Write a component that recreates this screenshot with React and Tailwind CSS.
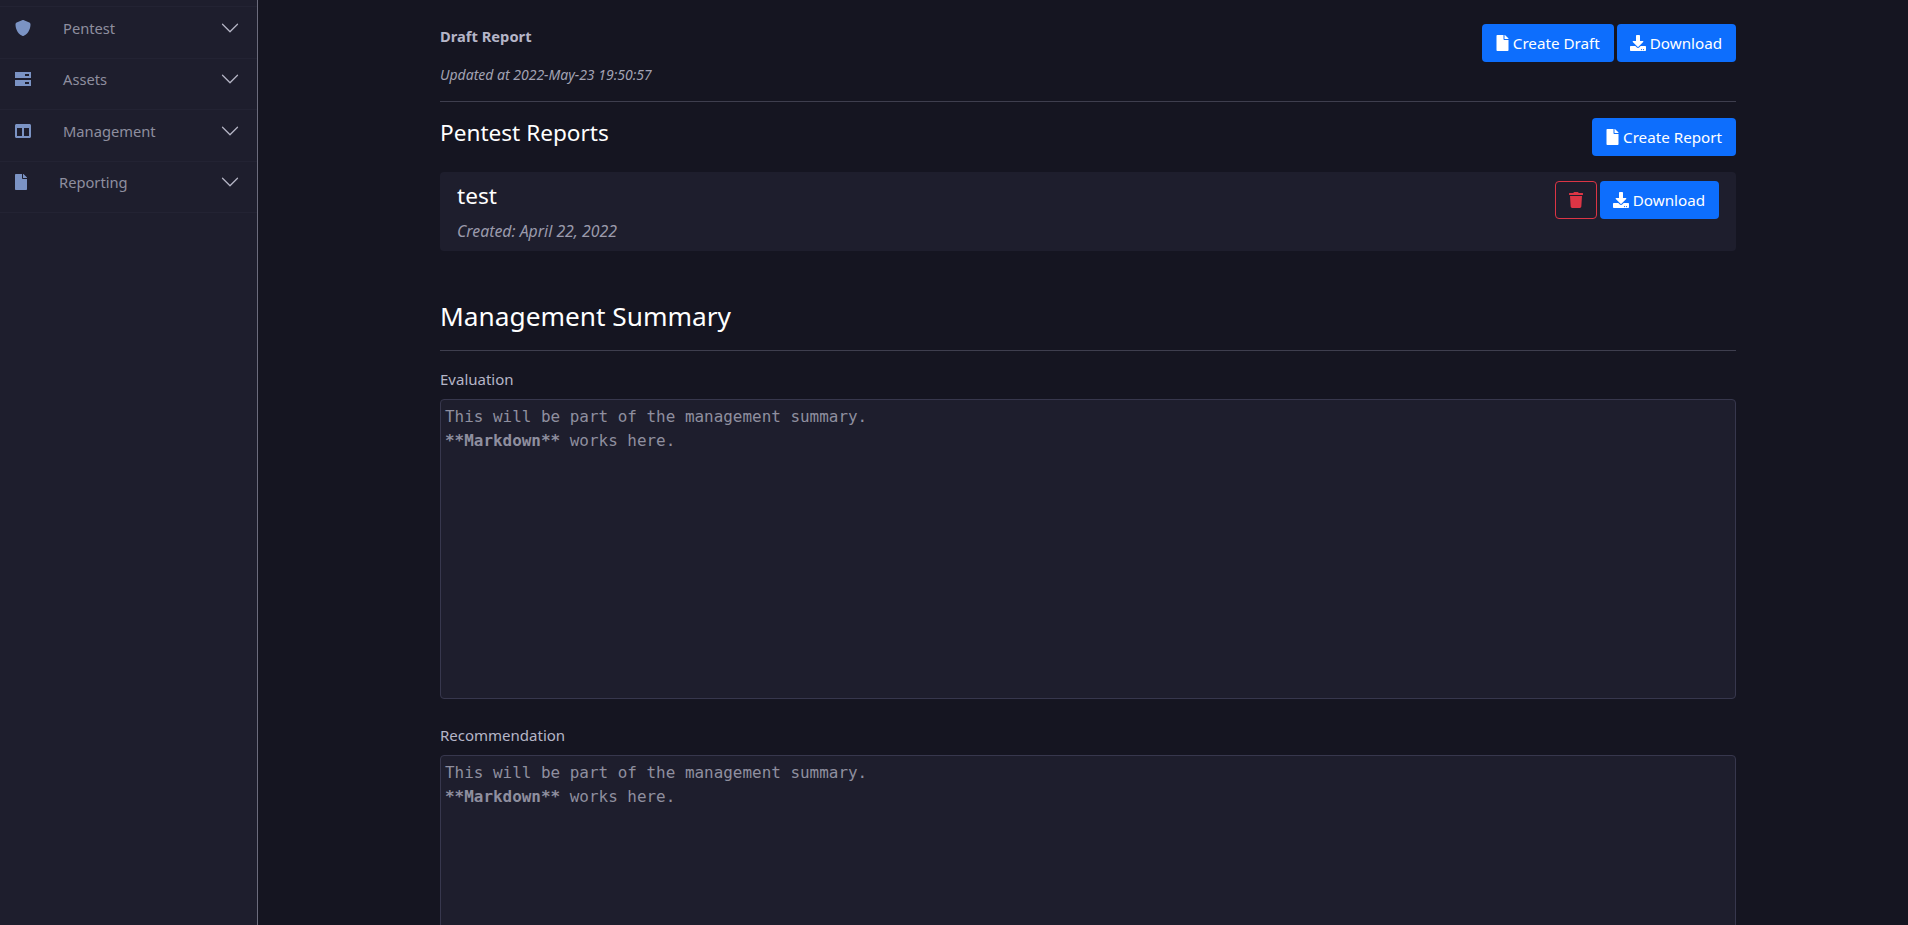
import { FaColumns, FaFile, FaDownload, FaTrash } from 'react-icons/fa';
import { FaShield } from 'react-icons/fa6';

// two stacked drive bars with a slot on the right
function ServerIcon() {
  return (
    <svg width="16" height="16" viewBox="0 0 16 16" fill="currentColor" className="text-[#7b93c4]">
      <path fillRule="evenodd" d="M0 1h16v6H0zM10 3v2h4V3zM0 9h16v6H0zM10 11v2h4v-2z" />
    </svg>
  );
}

const navItems = [
  { label: 'Pentest', icon: <FaShield className="text-[16px] text-[#7b93c4]" /> },
  { label: 'Assets', icon: <ServerIcon /> },
  { label: 'Management', icon: <FaColumns className="text-[16px] text-[#7b93c4]" /> },
  { label: 'Reporting', icon: <FaFile className="text-[16px] w-[12px] text-[#7b93c4]" /> },
];

function Chevron() {
  return (
    <svg width="20" height="20" viewBox="0 0 16 16" fill="currentColor" className="text-[#b4b4c4] ml-auto">
      <path fillRule="evenodd" d="M1.646 4.646a.5.5 0 0 1 .708 0L8 10.293l5.646-5.647a.5.5 0 0 1 .708.708l-6 6a.5.5 0 0 1-.708 0l-6-6a.5.5 0 0 1 0-.708z" />
    </svg>
  );
}

function FileButton({ children }) {
  return (
    <button className="h-[38px] px-[14px] rounded-[4px] bg-[#0d6efd] text-white text-[15.2px] flex items-center gap-[4px]">
      <FaFile className="text-[16px] w-[13px]" />
      {children}
    </button>
  );
}

function DownloadButton() {
  return (
    <button className="h-[38px] pl-[13px] pr-[14px] rounded-[4px] bg-[#0d6efd] text-white text-[15.2px] flex items-center gap-[4px]">
      <FaDownload className="text-[16px]" />
      Download
    </button>
  );
}

function MarkdownBox() {
  return (
    <div className="h-[300px] shrink-0 rounded-[4px] border border-[#37374d] bg-[#1e1e2d] pt-[5px] pl-[4px] font-['DejaVu_Sans_Mono',monospace] text-[15.95px] leading-6 text-[#8f8f9f]">
      <div>This will be part of the management summary.</div>
      <div>
        <b className="font-bold">**Markdown**</b> works here.
      </div>
    </div>
  );
}

export default function App() {
  return (
    <div className="flex h-[925px] overflow-hidden bg-[#151521] font-['Noto_Sans',sans-serif]">
      {/* Sidebar */}
      <aside className="w-[258px] shrink-0 h-full border-r border-[#6c6c7c] bg-[#1e1e2d] pt-[6px]">
        <div className="border-t border-[#232333]">
          {navItems.map(({ label, icon }) => (
            <div key={label} className="h-[51.5px] flex items-center gap-[32px] pl-[15px] pr-[17px] pb-[9px] border-b border-[#232333] text-[#8e8e9f] text-[14.7px]">
              {icon}
              <span>{label}</span>
              <Chevron />
            </div>
          ))}
        </div>
      </aside>

      {/* Main */}
      <main className="flex-1 min-w-0 pl-[182px]">
        <div className="w-[1296px] flex flex-col">
          <div className="h-[102px] flex justify-between pt-[24px] border-b border-[#3e3e4e]">
            <div>
              <div className="text-[14.7px] font-bold text-[#b5b5c8] leading-[24px]">Draft Report</div>
              <div className="mt-[17px] text-[14px] italic text-[#a2a2b3] leading-[20px]">Updated at 2022-May-23 19:50:57</div>
            </div>
            <div className="flex gap-[3px]">
              <FileButton>Create Draft</FileButton>
              <DownloadButton />
            </div>
          </div>

          <div className="flex justify-between mt-[16px]">
            <h2 className="text-[22.6px] leading-[29px] text-white">Pentest Reports</h2>
            <FileButton>Create Report</FileButton>
          </div>

          <div className="mt-[16px] h-[79px] flex justify-between rounded-[4px] bg-[#1e1e2d] pl-[17px] pr-[17px]">
            <div>
              <div className="text-[22.6px] leading-[32px] text-white mt-[8px]">test</div>
              <div className="text-[15.85px] italic text-[#9a9aab] leading-[24px] mt-[7px]">Created: April 22, 2022</div>
            </div>
            <div className="flex gap-[3px] mt-[9px]">
              <button className="h-[38px] w-[42px] rounded-[4px] border border-[#dc3545] flex items-center justify-center text-[#dc3545]">
                <FaTrash className="text-[16px]" />
              </button>
              <DownloadButton />
            </div>
          </div>

          <h2 className="mt-[45px] text-[26.25px] leading-[40px] text-white">Management Summary</h2>
          <div className="mt-[14px] border-t border-[#3e3e4e]" />

          <label className="mt-[16px] mb-[8px] text-[15px] leading-[24px] text-[#b5b5c8]">Evaluation</label>
          <MarkdownBox />

          <label className="mt-[24px] mb-[8px] text-[15px] leading-[24px] text-[#b5b5c8]">Recommendation</label>
          <MarkdownBox />
        </div>
      </main>
    </div>
  );
}
